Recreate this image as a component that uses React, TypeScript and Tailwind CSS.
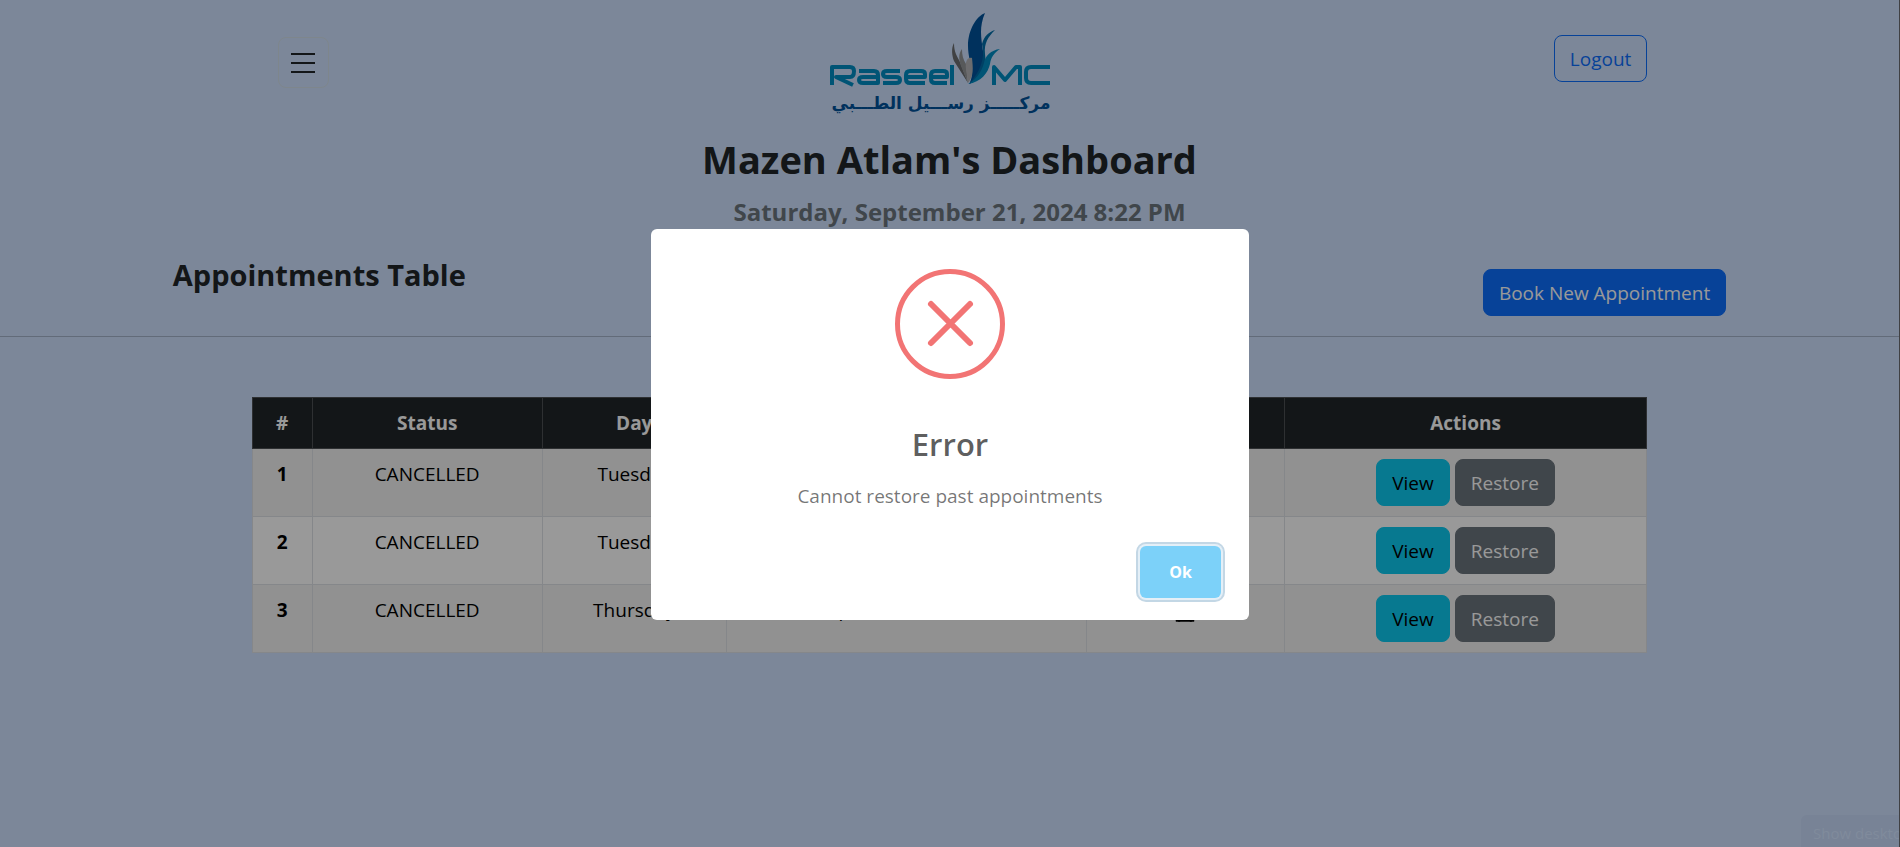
import { Hourglass } from "lucide-react";

const appointments = [
  { id: 1, status: "CANCELLED", day: "Tuesday", date: "September 17, 2024" },
  { id: 2, status: "CANCELLED", day: "Tuesday", date: "September 17, 2024" },
  { id: 3, status: "CANCELLED", day: "Thursday", date: "September 19, 2024" },
];

const button = "h-[47px] rounded-lg border px-[15px] text-[19px] leading-7";
const cell = "border border-[#dee2e6] px-2.5 py-2.5 font-normal";
const headCell = "border border-[#4d5154] px-2.5 py-2.5 font-bold";

function Logo() {
  return (
    <svg viewBox="0 0 222 104" className="h-[104px] w-[222px]" role="img" aria-label="Raseel MC">
      <path d="M155 1C147 4 138 17 138 34C138 44 141 51 142 60C142 66 140 71 139 72C152 67 156 53 153 39C151 25 149 15 155 1Z" fill="#00529c" />
      <path d="M165 18C159 20 154 24 152 32C156 47 149 61 139 72C152 67 157 53 155 42C154 31 158 25 165 18Z" fill="#006da8" />
      <path d="M170 37C161 38 155 44 154 51C151 62 144 69 138 72C151 70 158 61 160 52C161 45 164 41 170 37Z" fill="#008cc4" />
      <path d="M124 31C121 36 122 44 124 49L138 71L130 50C127 44 124 40 124 31Z" fill="#6b6d70" />
      <path d="M132 37C128 42 129 48 131 54L138 71L136 52C133 47 132 43 132 37Z" fill="#929497" />
      <path d="M142 46C137 45 135 50 136 57L138 71C144 64 143 56 142 46Z" fill="#b5b5b7" />
      <g fill="none" stroke="#008dc4" strokeWidth="4" strokeLinejoin="round">
        <path d="M2 73V55H20Q24 55 24 59Q24 65 20 65H6L23 73" />
        <path d="M29 59H44Q48 59 48 63V71H33Q29 71 29 68Q29 65 33 65H48" />
        <path d="M70 59H57Q53 59 53 62Q53 65 57 65H66Q70 65 70 68Q70 71 66 71H53" />
        <path d="M95 71H80Q76 71 76 67V63Q76 59 80 59H91Q95 59 95 62V65H76" />
        <path d="M117 71H105Q101 71 101 67V63Q101 59 105 59H113Q117 59 117 62V65H101" />
        <path d="M122 53V73" />
        <path d="M164 73V55L175 68L186 55H190V73" />
        <path d="M220 55H201Q196 55 196 60V66Q196 71 201 71H220" />
      </g>
      <text x="111" y="97" textAnchor="middle" direction="rtl" fill="#00529c" className="font-['DejaVu_Sans',sans-serif] text-[17px] font-bold">
        مركـــــز رســـيل الطـــبي
      </text>
    </svg>
  );
}

function MenuIcon() {
  return (
    <svg viewBox="0 0 24 20" className="h-5 w-6" stroke="#212529" strokeWidth="2" aria-hidden="true">
      <path d="M0 1H24M0 10H24M0 19H24" />
    </svg>
  );
}

function ErrorDialog() {
  return (
    <div className="fixed inset-0 flex items-start justify-center bg-black/40 pt-[229px]">
      <div
        role="alertdialog"
        aria-labelledby="dialog-title"
        aria-describedby="dialog-text"
        className="flex w-[598px] flex-col items-center rounded-md bg-white pt-10 pb-[22px]"
      >
        <svg viewBox="0 0 110 110" className="size-[110px]" fill="none" stroke="#f27474" aria-hidden="true">
          <circle cx="55" cy="55" r="52.5" strokeWidth="5" />
          <path d="M36 35L75 74M75 35L36 74" strokeWidth="6" strokeLinecap="round" />
        </svg>
        <h2 id="dialog-title" className="mt-[45px] text-[31px] leading-10 font-semibold text-black/65">
          Error
        </h2>
        <p id="dialog-text" className="mt-[18px] text-[19px] leading-7 text-black/55">
          Cannot restore past appointments
        </p>
        <button
          type="button"
          className="mt-9 mr-7 h-[52px] self-end rounded-md bg-[#7cd1f9] px-[29px] text-base font-bold text-white shadow-[0_0_0_2px_#e4eff7,0_0_0_4px_#c3d7e5]"
        >
          Ok
        </button>
      </div>
    </div>
  );
}

export default function App() {
  return (
    <div className="min-h-screen border-r border-[#6b6b70] bg-[#cfe2ff] font-['Open_Sans','Noto_Sans',sans-serif] text-[19px] leading-[30px] text-[#212529]">
      <header className="mx-auto flex w-[73.5%] items-start justify-between pl-[26px]">
        <button type="button" aria-label="Open menu" className="mt-[37px] flex size-[51px] items-center justify-center rounded-lg border border-[#d2dfea]">
          <MenuIcon />
        </button>
        <div className="mt-3">
          <Logo />
        </div>
        <button type="button" className={`${button} mt-[35px] border-[#0d6efd] text-[#0d6efd]`}>
          Logout
        </button>
      </header>

      <h1 className="mt-[19px] text-center text-[38px] leading-12 font-bold">Mazen Atlam's Dashboard</h1>
      <p className="mt-3.5 pl-5 text-center text-2xl leading-[30px] font-bold text-[#6c757d]">
        Saturday, September 21, 2024 8:22 PM
      </p>

      <section className="mt-[30px] flex items-start justify-between border-b border-[#a3b3ca] pr-[9.1%] pb-5 pl-[9.1%]">
        <h2 className="text-[29px] leading-9 font-bold">Appointments Table</h2>
        <button type="button" className={`${button} mt-3 border-[#0d6efd] bg-[#0d6efd] text-white`}>
          Book New Appointment
        </button>
      </section>

      <table className="mx-auto mt-[60px] w-[73.5%] table-fixed border-collapse text-center text-black">
        <colgroup>
          <col className="w-[4.3%]" />
          <col className="w-[16.5%]" />
          <col className="w-[13.2%]" />
          <col className="w-[25.8%]" />
          <col className="w-[14.2%]" />
          <col className="w-[26%]" />
        </colgroup>
        <thead className="bg-[#212529] text-white">
          <tr>
            <th className={headCell}>#</th>
            <th className={headCell}>Status</th>
            <th className={headCell}>Day</th>
            <th className={headCell}>Date</th>
            <th className={headCell}>Time</th>
            <th className={headCell}>Actions</th>
          </tr>
        </thead>
        <tbody className="align-top">
          {appointments.map((item) => (
            <tr key={item.id} className="bg-white odd:bg-[#f2f2f2]">
              <th scope="row" className="border border-[#dee2e6] px-2.5 py-2.5 font-bold">{item.id}</th>
              <td className={cell}>{item.status}</td>
              <td className={cell}>{item.day}</td>
              <td className={cell}>{item.date}</td>
              <td className={cell}>
                <Hourglass className="mx-auto size-7" aria-label="Pending" />
              </td>
              <td className={cell}>
                <div className="flex justify-center gap-[5px]">
                  <button type="button" className={`${button} border-[#0dcaf0] bg-[#0dcaf0] text-black`}>View</button>
                  <button type="button" className={`${button} border-[#6c757d] bg-[#6c757d] text-white`}>Restore</button>
                </div>
              </td>
            </tr>
          ))}
        </tbody>
      </table>

      <ErrorDialog />
      <div className="fixed right-px bottom-0 w-[98px] overflow-hidden rounded-tl-md bg-[#788396] pt-1 pl-3 text-[15px] leading-7 whitespace-nowrap text-[#808b9c]">
        Show deskto
      </div>
    </div>
  );
}
